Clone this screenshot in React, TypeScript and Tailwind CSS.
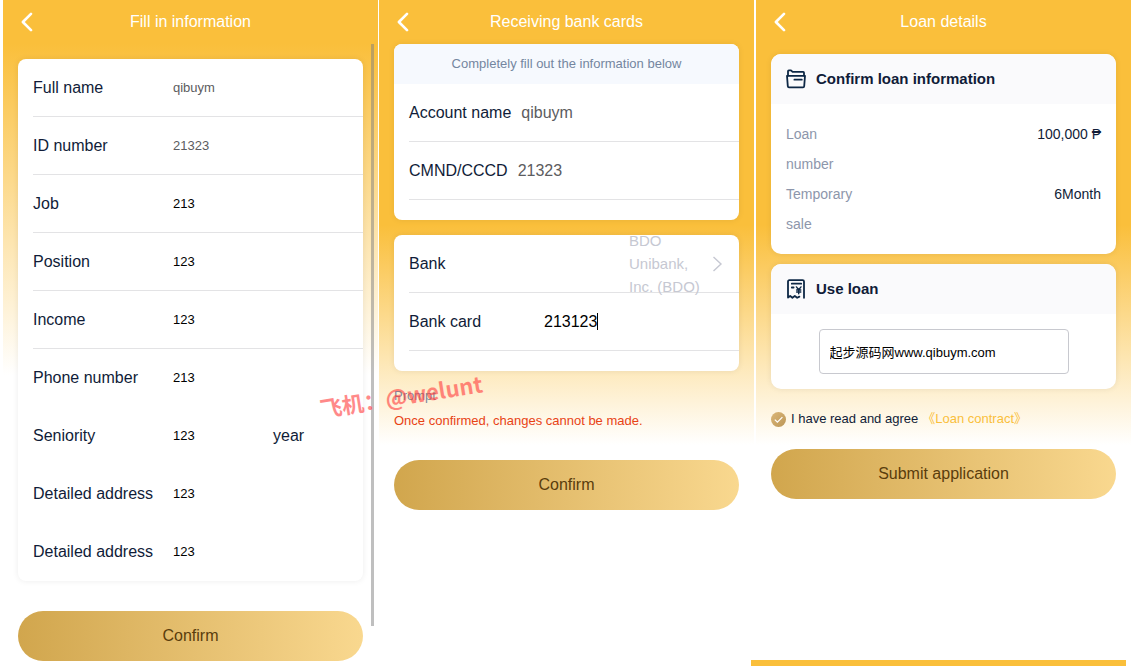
import { useState, type ReactNode } from "react";

const BODY_FONT = "font-['Liberation_Sans','Noto_Sans_CJK_SC',sans-serif]";

function BackIcon() {
  return (
    <svg width="12" height="20" viewBox="0 0 12 20" fill="none" stroke="#fff" strokeWidth="2.6" strokeLinecap="round" strokeLinejoin="round">
      <path d="M10 1.8 1.9 10 10 18.2" />
    </svg>
  );
}

function FolderIcon() {
  return (
    <svg width="20" height="20" viewBox="0 0 20 20" fill="none" stroke="#0d2745" strokeWidth="1.8" strokeLinecap="round" strokeLinejoin="round">
      <path d="M2 6.6V2.2Q2 1.4 2.8 1.4H5L6.6 2.9H17.2Q18 2.9 18 3.7V6.6" />
      <path d="M1 6.8H19L18.2 17.2Q18.1 18.3 17 18.3H3Q1.9 18.3 1.8 17.2Z" />
      <path d="M8.4 10.7H15.8" />
    </svg>
  );
}

function ReceiptIcon() {
  return (
    <svg width="20" height="20" viewBox="0 0 20 20" fill="none" stroke="#0d2745" strokeWidth="1.8" strokeLinecap="round" strokeLinejoin="round">
      <path d="M18 18.8V2.6Q18 1.2 16.6 1.2H3.4Q2 1.2 2 2.6V18.6L4.2 17 6.4 18.8 8.8 17 11.2 18.8 13.4 17.6" />
      <path d="M5.8 4.7H15.2M5.8 8.5H7.6" />
      <path d="M10.4 7.9 12.7 10.8 15 7.9M12.7 10.8V14.8M10.6 11H14.8M10.6 13H14.8" strokeWidth="1.4" />
    </svg>
  );
}

function Screen({ title, className, children }: { title: string; className: string; children: ReactNode }) {
  return (
    <section className={`relative flex min-w-0 flex-1 flex-col ${className}`}>
      <header className="grid h-11 shrink-0 grid-cols-[40px_1fr_40px] items-center text-white">
        <button type="button" aria-label="Back" className="flex h-11 items-center pl-[18px]">
          <BackIcon />
        </button>
        <h1 className="text-center text-base leading-[22px]">{title}</h1>
      </header>
      {children}
    </section>
  );
}

function PrimaryButton({ children }: { children: ReactNode }) {
  return (
    <button type="button" className="mx-[15px] h-[50px] shrink-0 rounded-full bg-linear-to-r from-[#d1a64d] to-[#f9d88f] text-base text-[#5a3d0c]">
      {children}
    </button>
  );
}

type Info = { id: string; label: string; value: string; locked?: boolean; line?: boolean; unit?: string };

const INFO: Info[] = [
  { id: "name", label: "Full name", value: "qibuym", locked: true, line: true },
  { id: "idno", label: "ID number", value: "21323", locked: true, line: true },
  { id: "job", label: "Job", value: "213", line: true },
  { id: "position", label: "Position", value: "123", line: true },
  { id: "income", label: "Income", value: "123", line: true },
  { id: "phone", label: "Phone number", value: "213" },
  { id: "seniority", label: "Seniority", value: "123", unit: "year" },
  { id: "address1", label: "Detailed address", value: "123" },
  { id: "address2", label: "Detailed address", value: "123" },
];

function InfoRow({ id, label, value, locked, line, unit }: Info) {
  return (
    <div className={`ml-[15px] flex h-[58px] items-center border-b ${line ? "border-[#e3e3e5]" : "border-transparent"}`}>
      <label htmlFor={id} className="w-[140px] shrink-0">{label}</label>
      <input
        id={id}
        defaultValue={value}
        readOnly={locked}
        className={`w-[100px] min-w-0 bg-transparent text-[13px] outline-none ${locked ? "text-[#5c5c60]" : "text-black"}`}
      />
      {unit && <span>{unit}</span>}
    </div>
  );
}

function AccountRow({ id, label, value }: { id: string; label: string; value: string }) {
  return (
    <div className="ml-[15px] flex h-[58px] items-center gap-2.5 border-b border-[#e3e3e5]">
      <label htmlFor={id} className="shrink-0">{label}</label>
      <input id={id} defaultValue={value} readOnly className="min-w-0 flex-1 bg-transparent text-[#5c5c60] outline-none" />
    </div>
  );
}

function SectionTitle({ icon, children }: { icon: ReactNode; children: ReactNode }) {
  return (
    <div className="flex h-[50px] items-center gap-2.5 rounded-t-[10px] bg-[#fafafc] px-[15px]">
      {icon}
      <h2 className="text-[15px] font-bold">{children}</h2>
    </div>
  );
}

function LoanLine({ label, value }: { label: string; value: string }) {
  return (
    <div className="flex justify-between">
      <dt className="w-[75px] text-[#8d96ab]">{label}</dt>
      <dd>{value}</dd>
    </div>
  );
}

export default function App() {
  const [agreed, setAgreed] = useState(true);

  return (
    <main className={`relative flex min-h-screen bg-white pr-px pl-[3px] text-base text-[#101c38] ${BODY_FONT}`}>
      <Screen title="Fill in information" className="bg-[linear-gradient(#fabf3b_44px,#fff_375px)]">
        <form className="mx-[15px] mt-[15px] mb-[30px] rounded-lg bg-white shadow-[0_0_6px_rgba(0,0,0,0.08)]">
          {INFO.map((row) => (
            <InfoRow key={row.id} {...row} />
          ))}
        </form>
        <PrimaryButton>Confirm</PrimaryButton>
        <div className="absolute top-11 right-1 h-[582px] w-[3px] bg-[#7f7f7f]/50" />
      </Screen>

      <Screen title="Receiving bank cards" className="ml-px bg-[linear-gradient(#fabf3b_225px,#fff_445px)]">
        <div className="mx-[15px] rounded-lg bg-white pb-5 shadow-[0_0_6px_rgba(0,0,0,0.08)]">
          <p className="rounded-t-lg bg-[#f6f9fe] text-center text-[13px] leading-10 text-[#7486a0]">
            Completely fill out the information below
          </p>
          <AccountRow id="account" label="Account name" value="qibuym" />
          <AccountRow id="cccd" label="CMND/CCCD" value="21323" />
        </div>
        <div className="mx-[15px] mt-[15px] rounded-lg bg-white pb-5 shadow-[0_0_6px_rgba(0,0,0,0.08)]">
          <div className="ml-[15px] flex h-[58px] items-center justify-between border-b border-[#e3e3e5] pr-[15px]">
            <span id="bank-label">Bank</span>
            <button type="button" aria-labelledby="bank-label bank-value" className="flex items-center gap-2 text-left text-[15px] leading-[23px] text-[#c6c8d2]">
              <span id="bank-value" className="w-[75px]">BDO Unibank, Inc. (BDO)</span>
              <svg width="12" height="16" viewBox="0 0 12 16" fill="none" stroke="#c6c8d2" strokeWidth="1.4">
                <path d="M1.5 1 9 8 1.5 15" />
              </svg>
            </button>
          </div>
          <div className="ml-[15px] flex h-[58px] items-center border-b border-[#e3e3e5]">
            <label htmlFor="card" className="w-[135px] shrink-0">Bank card</label>
            <input id="card" defaultValue="213123" className="field-sizing-content bg-transparent text-black outline-none" />
            <span className="h-[17px] w-px bg-black" />
          </div>
        </div>
        <div className="mx-[15px] mt-3 mb-[27px] text-[13px] leading-[25px]">
          <p className="text-[#7c879c]">Prompt</p>
          <p className="text-[#e84315]">Once confirmed, changes cannot be made.</p>
        </div>
        <PrimaryButton>Confirm</PrimaryButton>
      </Screen>

      <Screen title="Loan details" className="ml-[2px] bg-[linear-gradient(#fabf3b_225px,#fff_445px)]">
        <div className="mx-[15px] mt-2.5 rounded-[10px] bg-white shadow-[0_0_6px_rgba(0,0,0,0.08)]">
          <SectionTitle icon={<FolderIcon />}>Confirm loan information</SectionTitle>
          <dl className="p-[15px] text-sm leading-[30px]">
            <LoanLine label="Loan number" value="100,000 ₱" />
            <LoanLine label="Temporary sale" value="6Month" />
          </dl>
        </div>
        <div className="mx-[15px] mt-2.5 rounded-[10px] bg-white shadow-[0_0_6px_rgba(0,0,0,0.08)]">
          <SectionTitle icon={<ReceiptIcon />}>Use loan</SectionTitle>
          <div className="flex justify-center p-[15px]">
            <input
              aria-label="Use loan"
              defaultValue="起步源码网www.qibuym.com"
              className="h-[45px] w-[250px] rounded border border-[#c8c9cf] bg-white px-2.5 text-[13px] text-black outline-none"
            />
          </div>
        </div>
        <div className="mx-[15px] my-[15px] flex h-[30px] items-center gap-1 text-[13px]">
          <label className="flex items-center gap-[5px]">
            <span className="relative flex">
              <input
                type="checkbox"
                checked={agreed}
                onChange={(e) => setAgreed(e.target.checked)}
                className="size-[15px] appearance-none rounded-full bg-linear-to-br from-[#dcb778] to-[#bb9656]"
              />
              {agreed && (
                <svg className="pointer-events-none absolute inset-0" width="15" height="15" viewBox="0 0 15 15" fill="none" stroke="#fff" strokeWidth="1.2">
                  <path d="M3.8 7.6 6.4 10.2 11.4 5.2" />
                </svg>
              )}
            </span>
            I have read and agree
          </label>
          <a href="#contract" className="text-[#fabf3b]">《Loan contract》</a>
        </div>
        <PrimaryButton>Submit application</PrimaryButton>
        <div className="mt-auto mr-[5px] -ml-[5px] h-1.5 bg-[#fabf3b]" />
      </Screen>

      <p className="pointer-events-none absolute top-[379px] left-[319px] -rotate-9 text-[22px] leading-8 font-bold whitespace-nowrap text-[#ff3b3b]/60 font-['Noto_Sans_CJK_SC',sans-serif]">
        飞机：@welunt
      </p>
    </main>
  );
}
